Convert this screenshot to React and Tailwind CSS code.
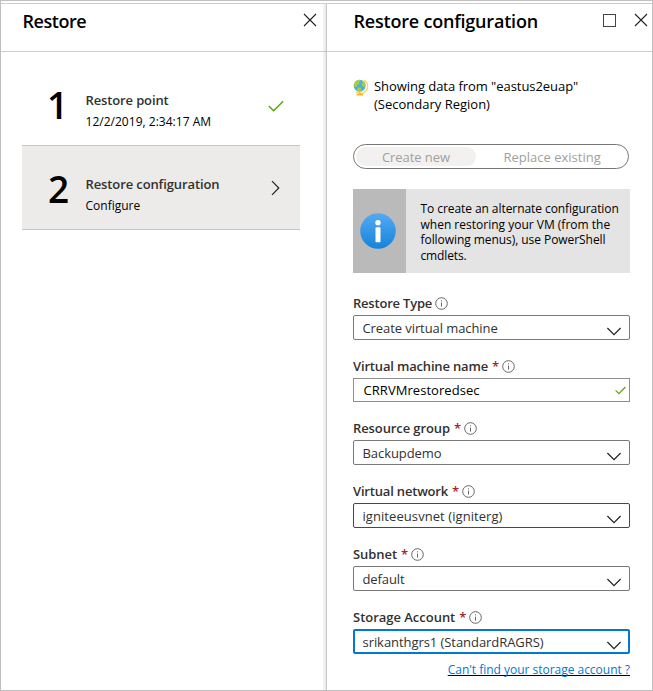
const Close = () => (
  <svg className="h-[14px] w-[14px]" viewBox="0 0 14 14" fill="none" stroke="#222" strokeWidth="1.1">
    <path d="M1 1l12 12M13 1L1 13" />
  </svg>
);

const Info = () => (
  <svg className="h-[13px] w-[13px] shrink-0" viewBox="0 0 13 13" fill="none" stroke="#666" strokeWidth="1">
    <circle cx="6.5" cy="6.5" r="5.8" />
    <path d="M6.5 5.6v4M6.5 3.3v1.1" />
  </svg>
);

const Globe = () => (
  <svg className="mt-[2px] h-[17px] w-[15px] shrink-0" viewBox="0 0 15 17">
    <path d="M11 1.2A7 7 0 0 1 6.2 14.2L3 13.2" fill="none" stroke="#fcd15c" strokeWidth="1.5" />
    <path d="M6 13.5h2.2v1.6h1.8v1.4H3.6v-1.4H6z" fill="#f6b42c" />
    <circle cx="6.7" cy="6.8" r="6" fill="#4fb0e0" />
    <path d="M2 3.2C3.4 1.4 5 .9 6.8.8L7.4 2 6 3.4l.4 1.4-2 1.2L3.2 8 1 7.6C.8 6 1.2 4.4 2 3.2z" fill="#a8ce3a" />
    <path d="M9 1.4c2 .9 3.4 2.8 3.7 4.6L11.6 8 9.8 7.4 8.6 5l1-1.4z" fill="#a8ce3a" />
    <path d="M4.6 8.4l2.6.4 1.4 1.6-1.6 2.4-2.6-.5z" fill="#a8ce3a" />
  </svg>
);

const Chevron = () => (
  <svg className="mt-[7px] mr-[7px] h-[9px] w-[16px] shrink-0" viewBox="0 0 16 9" fill="none" stroke="#222" strokeWidth="1.2">
    <path d="M1.4 1L8 7.6 14.6 1" />
  </svg>
);

function Field({ label, labelClass, required, children }) {
  return (
    <div>
      <div className="flex h-6 items-center whitespace-nowrap text-[13px] font-semibold text-[#323130]">
        <span className={`pt-[2px] ${labelClass}`}>{label}</span>
        {required && <span className="ml-[4px] w-[6px] pt-[2px] text-[#a4262c]">*</span>}
        <span className={required ? "ml-[4px]" : "ml-[3px]"}>
          <Info />
        </span>
      </div>
      {children}
    </div>
  );
}

function Select({ value, textClass, frame }) {
  return (
    <div className={`flex h-[25px] items-center justify-between rounded-[2px] text-[13px] text-[#323130] ${frame}`}>
      <span className={`pt-[2px] whitespace-nowrap ${textClass}`}>{value}</span>
      <Chevron />
    </div>
  );
}

const plain = "border border-[#7a7978] pl-[8.5px]";

export default function App() {
  return (
    <div className="h-[691px] w-[653px] overflow-hidden border border-[#bfbfbf] bg-white pt-[2px] font-['Open_Sans','Noto_Sans',sans-serif] text-black">
      <div className="flex h-[687px] border-t border-[#cfcfcf]">
        <section className="relative w-[325px] shrink-0">
          <header className="flex h-[48px] items-start justify-between border-b border-[#cccccc] pl-[21.5px]">
            <h1 className="mt-[5px] text-[18px] leading-6 font-semibold tracking-[-0.45px]">Restore</h1>
            <span className="mt-[9px] mr-[9px]"><Close /></span>
          </header>
          <div className="pt-[9px] pr-[26px] pl-[21px]">
            <div className="flex h-[84px] pt-[29px] pr-[16px] pl-[26px]">
              <div className="-mt-[6px] -ml-[1px] w-[38.5px] text-[37px] leading-[42px] font-semibold tracking-[-1px]">1</div>
              <div className="flex-1">
                <div className="text-[13px] leading-[21px] font-semibold tracking-[-0.13px] text-[#323130]">Restore point</div>
                <div className="text-[12px] leading-[21px] tracking-[0.02px]">12/2/2019, 2:34:17 AM</div>
              </div>
              <svg className="mt-[10px] h-[12px] w-[16px]" viewBox="0 0 16 12" fill="none" stroke="#57a300" strokeWidth="1.3">
                <path d="M.8 6l4.8 4.8L15.2 1.2" />
              </svg>
            </div>
            <div className="flex h-[85px] border-y border-[#c8c6c4] bg-[#ecebe9] pt-[28px] pr-[20px] pl-[26px]">
              <div className="-mt-[6px] w-[37.5px] text-[37px] leading-[42px] font-semibold tracking-[-1px]">2</div>
              <div className="flex-1">
                <div className="text-[13px] leading-[21px] font-semibold tracking-[-0.11px] text-[#323130]">Restore configuration</div>
                <div className="text-[12px] leading-[21px]">Configure</div>
              </div>
              <svg className="mt-[6px] h-[16px] w-[9px]" viewBox="0 0 9 16" fill="none" stroke="#222" strokeWidth="1.2">
                <path d="M1 1.2L7.8 8 1 14.8" />
              </svg>
            </div>
          </div>
          <div className="absolute top-0 right-0 h-full w-[4px] bg-linear-to-r from-black/0 to-black/10" />
        </section>

        <section className="flex-1 border-l border-[#c8c8c8]">
          <header className="flex h-[48px] items-start border-b border-[#cccccc] pl-[26.5px]">
            <h2 className="mt-[5px] flex-1 text-[18px] leading-6 font-semibold tracking-[-0.2px] whitespace-nowrap">Restore configuration</h2>
            <span className="mt-[10px] mr-[18px] h-[13px] w-[13px] border border-[#444]" />
            <span className="mt-[9px] mr-[4px]"><Close /></span>
          </header>

          <div className="w-[303px] pl-[26px]">
            <div className="flex h-[92px] gap-[6px] pt-[25px] text-[13px] leading-[18px]">
              <Globe />
              <div className="whitespace-nowrap">
                <div className="tracking-[-0.05px]">Showing data from "eastus2euap"</div>
                <div>(Secondary Region)</div>
              </div>
            </div>

            <div className="flex h-[25px] w-[276px] items-center rounded-full border border-[#767676] p-[2px] text-[13px] leading-[19px] text-[#a19f9d]">
              <div className="h-[19px] w-[120px] rounded-full bg-[#f2f1f0] pl-[26px] tracking-[-0.07px]"><span className="block pt-px">Create new</span></div>
              <div className="pt-px pl-[27.5px] whitespace-nowrap">Replace existing</div>
            </div>

            <div className="mt-[20px] flex h-[84px] bg-[#e4e4e4]">
              <div className="flex w-[53px] items-center justify-center bg-[#bababa]">
                <svg className="-ml-[3px] h-[36px] w-[36px]" viewBox="0 0 36 36">
                  <defs>
                    <linearGradient id="info" x1="0" y1="0" x2="0" y2="1">
                      <stop offset="0" stopColor="#55aaf2" />
                      <stop offset="1" stopColor="#1583da" />
                    </linearGradient>
                  </defs>
                  <circle cx="18" cy="18" r="17.8" fill="url(#info)" />
                  <circle cx="18" cy="9.8" r="2.7" fill="#fff" />
                  <rect x="15.5" y="14.2" width="5" height="15" rx=".8" fill="#fff" />
                </svg>
              </div>
              <div className="pt-[12px] pl-[14.5px] text-[12px] leading-[15.6px] whitespace-nowrap">
                <div className="tracking-[-0.07px]">To create an alternate configuration</div>
                <div>when restoring your VM (from the</div>
                <div className="tracking-[-0.06px]">following menus), use PowerShell</div>
                <div className="tracking-[-0.13px]">cmdlets.</div>
              </div>
            </div>

            <div className="mt-[18px] flex flex-col gap-[14px]">
              <Field label="Restore Type" labelClass="tracking-[-0.21px]">
                <Select value="Create virtual machine" textClass="tracking-[-0.08px]" frame={plain} />
              </Field>
              <Field label="Virtual machine name" labelClass="tracking-[-0.17px]" required>
                <div className="flex h-[24px] items-center justify-between border border-[#8f8f8f] pr-[3px] pl-[9.5px] text-[13px]">
                  <span className="pt-px tracking-[0.05px]">CRRVMrestoredsec</span>
                  <svg className="h-[9px] w-[11px]" viewBox="0 0 11 9" fill="none" stroke="#57a300" strokeWidth="1.1">
                    <path d="M.6 4.4l3.3 3.3L10.4 1" />
                  </svg>
                </div>
              </Field>
              <Field label="Resource group" labelClass="tracking-[-0.1px]" required>
                <Select value="Backupdemo" textClass="tracking-[-0.07px]" frame={plain} />
              </Field>
              <Field label="Virtual network" labelClass="tracking-[-0.18px]" required>
                <Select value="igniteeusvnet (igniterg)" textClass="tracking-[0.07px]" frame="border border-[#881798] pl-[8.5px]" />
              </Field>
              <Field label="Subnet" labelClass="tracking-[-0.06px]" required>
                <Select value="default" textClass="tracking-[-0.1px]" frame={plain} />
              </Field>
              <Field label="Storage Account" labelClass="tracking-[-0.02px]" required>
                <Select value="srikanthgrs1 (StandardRAGRS)" textClass="tracking-[-0.06px]" frame="border-2 border-[#0078d4] pl-[7.5px] [&>svg]:mr-[6px]" />
              </Field>
            </div>
            <div className="mt-[7px] text-right text-[12px] leading-[18px] tracking-[-0.02px] whitespace-nowrap text-[#0078d4]">
              <a className="underline decoration-black decoration-1 underline-offset-[1px] [text-decoration-skip-ink:none]">Can't find your storage account ?</a>
            </div>
          </div>
        </section>
      </div>
    </div>
  );
}
